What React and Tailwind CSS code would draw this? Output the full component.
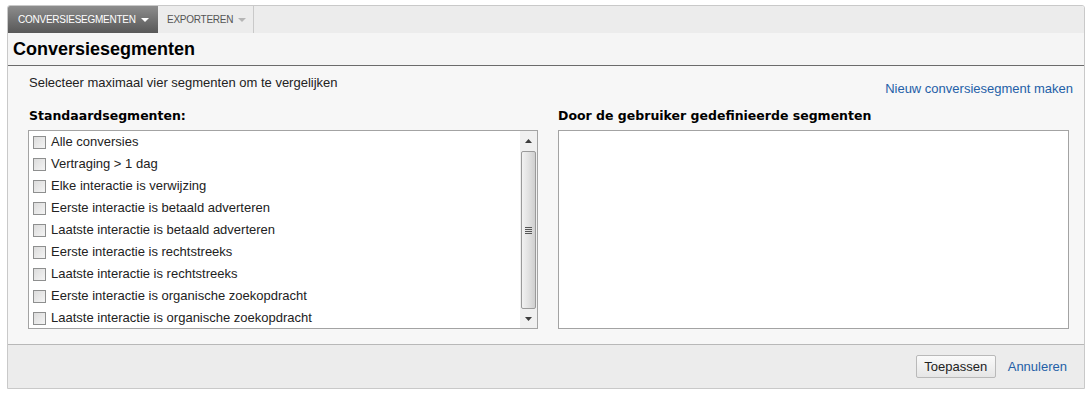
import React from 'react'

const ITEMS = [
  'Alle conversies',
  'Vertraging > 1 dag',
  'Elke interactie is verwijzing',
  'Eerste interactie is betaald adverteren',
  'Laatste interactie is betaald adverteren',
  'Eerste interactie is rechtstreeks',
  'Laatste interactie is rechtstreeks',
  'Eerste interactie is organische zoekopdracht',
  'Laatste interactie is organische zoekopdracht',
]

function Caret({ className }) {
  return (
    <svg width="8" height="4" viewBox="0 0 8 4" className={className}>
      <path d="M0 0h8L4 4z" fill="currentColor" />
    </svg>
  )
}

function Checkbox() {
  return (
    <span className="h-[13px] w-[13px] shrink-0 border border-[#8e8f8f] bg-gradient-to-br from-[#dcdcdc] to-[#f4f4f4]" />
  )
}

function Scrollbar() {
  return (
    <div className="flex h-full w-[17px] shrink-0 flex-col bg-[#f0f0f0]">
      <div className="flex h-[20px] items-center justify-center">
        <svg width="7" height="4" viewBox="0 0 7 4"><path d="M3.5 0L7 4H0z" fill="#3c3c3c" /></svg>
      </div>
      <div className="mx-px flex flex-1 items-center justify-center rounded-[2px] border border-[#9a9a9a] bg-gradient-to-r from-[#f2f2f2] via-[#e2e2e2] to-[#cfcfcf]">
        <div className="flex flex-col gap-px">
          <span className="h-px w-[7px] bg-[#555]" />
          <span className="h-px w-[7px] bg-[#555]" />
          <span className="h-px w-[7px] bg-[#555]" />
          <span className="h-px w-[7px] bg-[#555]" />
        </div>
      </div>
      <div className="flex h-[19px] items-center justify-center">
        <svg width="7" height="4" viewBox="0 0 7 4"><path d="M0 0h7L3.5 4z" fill="#3c3c3c" /></svg>
      </div>
    </div>
  )
}

export default function App() {
  return (
    <div className="h-[395px] w-[1091px] bg-white pl-[7px] pt-[5px] font-['Liberation_Sans',Arial,sans-serif] text-[#222]">
      <div className="w-[1078px] overflow-hidden rounded-t-[3px] border border-[#c9c9c9]">
        {/* toolbar */}
        <div className="flex h-[27px] bg-[#ececec]">
          <div className="flex w-[150px] items-center gap-[5px] bg-gradient-to-b from-[#8d8d8d] to-[#585858] pl-[10px] text-[10px] tracking-[-0.25px] text-white">
            CONVERSIESEGMENTEN
            <Caret className="text-white" />
          </div>
          <div className="flex w-[96px] items-center gap-[5px] border-r border-[#c9c9c9] pl-[9px] text-[10px] tracking-[-0.25px] text-[#555]">
            EXPORTEREN
            <Caret className="text-[#b5b5b5]" />
          </div>
        </div>

        {/* title */}
        <div className="flex h-[33px] items-center border-b border-[#6b6b6b] bg-[#f5f5f5] pl-[5px] text-[18px] font-bold text-black">
          Conversiesegmenten
        </div>

        {/* body */}
        <div className="bg-[#f7f7f7] px-[20px] pb-[15px]">
          <div className="flex items-start justify-between pt-[9px]">
            <div className="pl-px text-[13px] leading-[16px]">Selecteer maximaal vier segmenten om te vergelijken</div>
            <a className="mr-[-9px] mt-[6px] text-[13px] leading-[16px] text-[#2460a7]">Nieuw conversiesegment maken</a>
          </div>
          <div className="mt-[5px] grid grid-cols-[510px_511px] gap-[20px]">
            <div>
              <div className="pl-px font-['DejaVu_Sans',Verdana,sans-serif] text-[12.5px] font-bold leading-[28px] text-black">Standaardsegmenten:</div>
              <div className="flex h-[199px] border border-[#a3a3a3] bg-white">
                <div className="flex-1 overflow-hidden">
                  {ITEMS.map((item) => (
                    <div key={item} className="flex h-[22px] items-center gap-[5px] pl-[4px] text-[13px]">
                      <Checkbox />
                      <span>{item}</span>
                    </div>
                  ))}
                </div>
                <Scrollbar />
              </div>
            </div>
            <div>
              <div className="font-['DejaVu_Sans',Verdana,sans-serif] text-[12.5px] font-bold leading-[28px] text-black">Door de gebruiker gedefinieerde segmenten</div>
              <div className="h-[199px] border border-[#a3a3a3] bg-white" />
            </div>
          </div>
        </div>

        {/* footer */}
        <div className="flex h-[44px] items-center justify-end gap-[12px] border-t border-[#b8b8b8] bg-[#ececec] pr-[17px]">
          <button className="h-[23px] w-[80px] rounded-[2px] border border-[#b9b9b9] bg-gradient-to-b from-[#fafafa] to-[#e6e6e6] text-[13px] text-[#222]">
            Toepassen
          </button>
          <a className="text-[13px] text-[#2460a7]">Annuleren</a>
        </div>
      </div>
    </div>
  )
}
